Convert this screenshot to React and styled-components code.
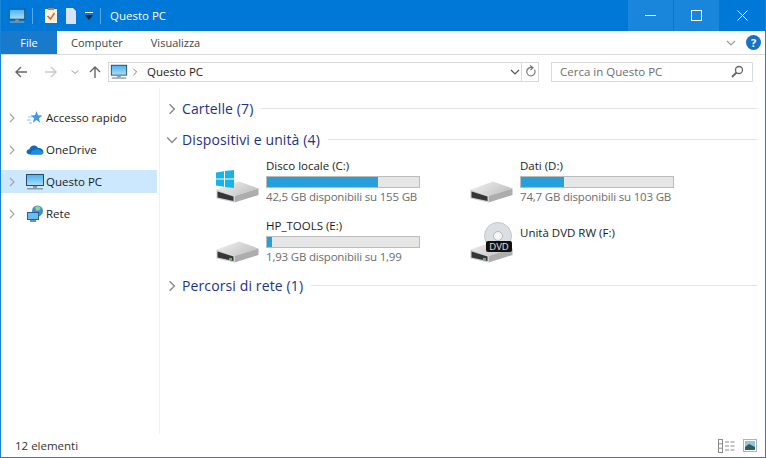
import React from "react";
import styled, { createGlobalStyle } from "styled-components";

const Global = createGlobalStyle`
  html, body { margin: 0; padding: 0; background: #fff; }
  body { font-family: "Open Sans", "Noto Sans", sans-serif; font-size: 11.5px; color: #1a1a1a; }
`;

function PcIcon({ size = 20 }) {
  return (
    <svg width={size} height={size} viewBox="0 0 20 20">
      <rect x="1" y="2" width="18" height="12" fill="#2b4a66" />
      <defs>
        <linearGradient id="pcscreen" x1="0" y1="0" x2="0" y2="1">
          <stop offset="0" stopColor="#4cb4ee" />
          <stop offset="1" stopColor="#a8dcf8" />
        </linearGradient>
      </defs>
      <rect x="2" y="3" width="16" height="10" fill="url(#pcscreen)" />
      <rect x="8" y="14" width="4" height="2" fill="#8d9aa5" />
      <rect x="2" y="16" width="16" height="1.5" fill="#8c99a5" />
    </svg>
  );
}

function StarIcon() {
  return (
    <svg width="18" height="18" viewBox="0 0 18 18">
      <path d="M10.500 2l1.500 4.300 4.500.2-3.600 2.800 1.300 4.400-3.700-2.600-3.700 2.600 1.300-4.400-3.600-2.800 4.500-.2z" fill="#3f9ae6" />
      <path d="M2 8h4M1 11h4M3 14h3" stroke="#8cc4ee" strokeWidth="1" />
    </svg>
  );
}

function CloudIcon() {
  return (
    <svg width="18" height="18" viewBox="0 0 18 18">
      <path d="M4 13.500c-2.400 0-3.600-1.400-3.400-3 .2-1.500 1.400-2.300 2.800-2.300C4 5.800 6 4.300 8.300 4.500c1.700.1 3 1 3.700 2.500 2.900-.4 5.400 1.500 5.400 4 0 1.500-1 2.500-2.500 2.500z" fill="#0f6cbd" />
      <path d="M5 13.500c-.5-2 .8-4 3.500-4.200 1.800-1.600 5.500-1.500 6.700 1 1.200 0 2 .8 2.200 1.500-.2.900-1 1.700-2.400 1.700z" fill="#1c8fe0" />
    </svg>
  );
}

function NetIcon() {
  return (
    <svg width="18" height="18" viewBox="0 0 18 18">
      <circle cx="11.500" cy="6" r="5.500" fill="#3d8fd0" />
      <path d="M9 2c2-1.500 5-1 5.500 1S12 6 10 5.500z" fill="#9ccf94" />
      <rect x="1" y="7" width="12" height="8" fill="#2b5f8f" />
      <rect x="2" y="8" width="10" height="6" fill="#66bdf0" />
      <rect x="4" y="15" width="6" height="2" fill="#7f8d99" />
    </svg>
  );
}

function DriveSvg({ led }) {
  return (
    <svg width="43" height="22" viewBox="0 0 43 22">
      <defs>
        <linearGradient id="drvtop" x1="0" y1="0" x2="1" y2="0.5">
          <stop offset="0" stopColor="#f2f2f2" />
          <stop offset="1" stopColor="#c4c4c4" />
        </linearGradient>
      </defs>
      <path d="M0.500 8.500L23 0.500 42.500 7.500 18.500 15z" fill="url(#drvtop)" />
      <path d="M18.500 15L42.500 7.500V14L18.500 21.500z" fill="#adadad" />
      <path d="M0.500 8.500L18.500 15V21.500L0.500 17.500z" fill="#cfcfcf" />
      <path d="M1.500 10.500L17.500 15.500V20L1.500 16.500z" fill="#34363a" />
      {led && <rect x="13" y="17" width="3" height="2" fill="#59c24f" />}
    </svg>
  );
}

function DriveIcon({ kind }) {
  return (
    <IconBox>
      {kind === "windows" && (
        <WinMark viewBox="0 0 18 18" width="18" height="18">
          <path d="M0 2.500L8 1.200V8.500H0zM9 1L18 0V8.500H9zM0 9.500H8V16.800L0 15.500zM9 9.500H18V18L9 17z" fill="#18b4e9" />
        </WinMark>
      )}
      <DriveBody>
        <DriveSvg led={kind === "usb" || kind === "dvd"} />
      </DriveBody>
      {kind === "dvd" && (
        <DiscMark viewBox="0 0 28 28" width="28" height="28">
          <circle cx="14" cy="14" r="13.500" fill="#dcdfe2" stroke="#c2c6ca" />
          <circle cx="14" cy="14" r="4.500" fill="#f4f4f4" stroke="#b4b8bc" />
          <circle cx="14" cy="14" r="1.500" fill="#fff" />
        </DiscMark>
      )}
      {kind === "dvd" && <DvdBadge>DVD</DvdBadge>}
    </IconBox>
  );
}

const drives = [
  { kind: "windows", name: "Disco locale (C:)", free: "42,5 GB disponibili su 155 GB", used: 73 },
  { kind: "plain", name: "Dati (D:)", free: "74,7 GB disponibili su 103 GB", used: 28 },
  { kind: "usb", name: "HP_TOOLS (E:)", free: "1,93 GB disponibili su 1,99", used: 3 },
  { kind: "dvd", name: "Unità DVD RW (F:)" },
];

const navItems = [
  { label: "Accesso rapido", icon: <StarIcon /> },
  { label: "OneDrive", icon: <CloudIcon /> },
  { label: "Questo PC", icon: <PcIcon size={20} />, active: true },
  { label: "Rete", icon: <NetIcon /> },
];

function Chevron({ down, color = "#a6a6a6", size = 10 }) {
  return (
    <svg width={size} height={size} viewBox="0 0 10 10">
      <path d={down ? "M1 3l4 4 4-4" : "M3 1l4 4-4 4"} fill="none" stroke={color} strokeWidth="1.200" />
    </svg>
  );
}

function Group({ title, open }) {
  return (
    <GroupHead>
      <Chevron down={open} color="#8a8a8a" size={12} />
      <GroupTitle>{title}</GroupTitle>
      <GroupLine />
    </GroupHead>
  );
}

export default function App() {
  return (
    <Win>
      <Global />
      <TitleBar>
        <QuickIcons>
          <PcIcon size={18} />
          <TitleSep $wide />
          <svg width="14" height="16" viewBox="0 0 14 16">
            <rect x="1" y="1" width="12" height="14" fill="#fdf1df" />
            <rect x="4" y="0" width="6" height="2" fill="#b5835a" />
            <path d="M3.500 8l3 3 4-6" fill="none" stroke="#e0632a" strokeWidth="1.500" />
          </svg>
          <svg width="14" height="16" viewBox="0 0 14 16">
            <path d="M2 0h7l3 3v13H2z" fill="#d6e4f5" />
          </svg>
          <svg width="10" height="10" viewBox="0 0 10 10">
            <rect x="1" y="1" width="8" height="1" fill="#fff" />
            <path d="M1 4h8L5 9z" fill="#10243a" />
          </svg>
          <TitleSep />
        </QuickIcons>
        <WinTitle>Questo PC</WinTitle>
        <WinButtons>
          <WinButton $lit>
            <svg width="11" height="11" viewBox="0 0 11 11"><path d="M0 5.500h11" stroke="#fff" /></svg>
          </WinButton>
          <WinButton $lit>
            <svg width="11" height="11" viewBox="0 0 11 11"><rect x=".5" y=".5" width="10" height="10" fill="none" stroke="#fff" /></svg>
          </WinButton>
          <WinButton>
            <svg width="11" height="11" viewBox="0 0 11 11"><path d="M.5.500l10 10M10.500.500l-10 10" stroke="#fff" /></svg>
          </WinButton>
        </WinButtons>
      </TitleBar>

      <Tabs>
        <FileTab>File</FileTab>
        <Tab>Computer</Tab>
        <Tab>Visualizza</Tab>
        <TabsEnd>
          <Chevron down color="#9a9a9a" size={10} />
          <Help>?</Help>
        </TabsEnd>
      </Tabs>

      <AddressRow>
        <NavArrows>
          <svg width="14" height="14" viewBox="0 0 14 14"><path d="M13 7H2M7 2L2 7l5 5" fill="none" stroke="#666" strokeWidth="1.400" /></svg>
          <svg width="14" height="14" viewBox="0 0 14 14"><path d="M1 7h11M7 2l5 5-5 5" fill="none" stroke="#c9c9c9" strokeWidth="1.400" /></svg>
          <Chevron down color="#8a8a8a" size={8} />
          <svg width="14" height="14" viewBox="0 0 14 14"><path d="M7 13V2M2 7l5-5 5 5" fill="none" stroke="#666" strokeWidth="1.400" /></svg>
        </NavArrows>
        <AddressBox>
          <PcIcon size={18} />
          <Chevron color="#777" size={8} />
          <Crumb>Questo PC</Crumb>
          <AddressEnd>
            <Chevron down color="#555" size={10} />
            <AddressDivider />
            <svg width="12" height="13" viewBox="0 0 12 13">
              <path d="M9.500 4.500a4.200 4.200 0 1 1-2-1.700" fill="none" stroke="#777" strokeWidth="1.200" />
              <path d="M5 .5l3 2.300L5.500 5" fill="none" stroke="#777" strokeWidth="1.200" />
            </svg>
          </AddressEnd>
        </AddressBox>
        <SearchBox>
          <span>Cerca in Questo PC</span>
          <svg width="13" height="13" viewBox="0 0 13 13">
            <circle cx="8" cy="5" r="3.500" fill="none" stroke="#666" strokeWidth="1.300" />
            <path d="M5.500 7.500L1 12" stroke="#666" strokeWidth="1.800" />
          </svg>
        </SearchBox>
      </AddressRow>

      <Body>
        <Nav>
          {navItems.map((item) => (
            <NavRow key={item.label} $active={item.active}>
              <Chevron color="#a6a6a6" />
              <NavIcon>{item.icon}</NavIcon>
              <span>{item.label}</span>
            </NavRow>
          ))}
        </Nav>
        <Content>
          <Group title="Cartelle (7)" />
          <Group title="Dispositivi e unità (4)" open />
          <DriveGrid>
            {drives.map((d) => (
              <Drive key={d.name}>
                <DriveIcon kind={d.kind} />
                <DriveText $solo={!d.free}>
                  <DriveName>{d.name}</DriveName>
                  {d.free && (
                    <>
                      <Bar>
                        <BarFill style={{ width: `${d.used}%` }} />
                      </Bar>
                      <DriveFree>{d.free}</DriveFree>
                    </>
                  )}
                </DriveText>
              </Drive>
            ))}
          </DriveGrid>
          <Group title="Percorsi di rete (1)" />
        </Content>
      </Body>

      <Status>
        <span>12 elementi</span>
        <ViewIcons>
          <svg width="17" height="14" viewBox="0 0 17 14">
            <rect x=".5" y=".5" width="4" height="13" fill="#fff" stroke="#8a8a8a" />
            <path d="M.5 4.800h4M.5 9.200h4" stroke="#8a8a8a" />
            <path d="M7 3h4M12.500 3h4M7 7h4M12.500 7h4M7 11h4M12.500 11h4" stroke="#8a8a8a" />
          </svg>
          <svg width="14" height="13" viewBox="0 0 14 13">
            <rect x=".5" y=".5" width="13" height="12" fill="#fff" stroke="#a9b4bd" />
            <rect x="2" y="2" width="10" height="9" fill="#8ec5e0" />
            <path d="M2 8l4-3 6 3v3H2z" fill="#2f5f55" />
          </svg>
        </ViewIcons>
      </Status>
    </Win>
  );
}

const Win = styled.div`
  width: 766px;
  height: 458px;
  box-sizing: border-box;
  border: 1px solid #1883d7;
  border-top: 0;
  display: flex;
  flex-direction: column;
  overflow: hidden;
  background: #fff;
`;
const TitleBar = styled.div`
  height: 31px;
  flex: none;
  margin: 0 -1px;
  background: #0078d7;
  display: flex;
  align-items: center;
  color: #fff;
`;
const QuickIcons = styled.div`
  display: flex;
  align-items: center;
  gap: 6px;
  padding-left: 8px;
`;
const TitleSep = styled.div`
  width: 1px;
  height: 16px;
  background: #5aa9e6;
  margin-right: ${(p) => (p.$wide ? "5px" : "0")};
`;
const WinTitle = styled.div`
  margin-left: 9px;
  font-size: 11.5px;
`;
const WinButtons = styled.div`
  margin-left: auto;
  display: flex;
  align-self: stretch;
  gap: 1px;
  margin-right: 1px;
`;
const WinButton = styled.div`
  width: 45px;
  display: flex;
  align-items: center;
  justify-content: center;
  background: ${(p) => (p.$lit ? "#1a86db" : "transparent")};
`;
const Tabs = styled.div`
  height: 23px;
  flex: none;
  display: flex;
  align-items: center;
  border-bottom: 1px solid #dadbdc;
  box-sizing: content-box;
`;
const FileTab = styled.div`
  width: 56px;
  align-self: stretch;
  background: #1979ca;
  color: #fff;
  display: flex;
  align-items: center;
  justify-content: center;
  font-size: 11px;
`;
const Tab = styled.div`
  padding: 0 14px;
  color: #444;
  font-size: 11px;
`;
const TabsEnd = styled.div`
  margin-left: auto;
  display: flex;
  align-items: center;
  gap: 10px;
  padding-right: 4px;
`;
const Help = styled.div`
  width: 15px;
  height: 15px;
  border-radius: 50%;
  background: #1673c4;
  color: #fff;
  font-weight: 700;
  font-size: 11px;
  display: flex;
  align-items: center;
  justify-content: center;
`;
const AddressRow = styled.div`
  height: 33px;
  flex: none;
  display: flex;
  align-items: center;
  padding-left: 13px;
`;
const NavArrows = styled.div`
  width: 94px;
  display: grid;
  grid-template-columns: 30px 27px 17px 14px;
  align-items: center;
`;
const AddressBox = styled.div`
  width: 431px;
  height: 20px;
  box-sizing: border-box;
  border: 1px solid #d9d9d9;
  display: flex;
  align-items: center;
  padding-left: 1px;
  gap: 3px;
`;
const Crumb = styled.span`
  margin-left: 5px;
`;
const AddressEnd = styled.div`
  margin-left: auto;
  display: flex;
  align-items: center;
  padding-right: 1px;
`;
const AddressDivider = styled.div`
  width: 1px;
  height: 18px;
  background: #d9d9d9;
  margin: 0 3px 0 1px;
`;
const SearchBox = styled.div`
  width: 202px;
  height: 20px;
  box-sizing: border-box;
  margin-left: 12px;
  border: 1px solid #d9d9d9;
  display: flex;
  align-items: center;
  justify-content: space-between;
  padding: 0 8px;
  color: #6d6d6d;
`;
const Body = styled.div`
  flex: 1;
  display: flex;
  min-height: 0;
`;
const Nav = styled.div`
  width: 159px;
  flex: none;
  box-sizing: border-box;
  padding-top: 18px;
  display: flex;
  flex-direction: column;
  gap: 9px;
  border-right: 1px solid #f0f0f0;
`;
const NavRow = styled.div`
  height: 23px;
  margin-right: 2px;
  display: flex;
  align-items: center;
  padding-left: 6px;
  background: ${(p) => (p.$active ? "#cce8ff" : "transparent")};
`;
const NavIcon = styled.div`
  width: 20px;
  height: 20px;
  margin: 0 1px 0 8px;
  display: flex;
  align-items: center;
  justify-content: center;
`;
const Content = styled.div`
  flex: 1;
  padding-top: 10px;
  padding-left: 6px;
  padding-right: 8px;
`;
const GroupHead = styled.div`
  height: 21px;
  margin-bottom: 10px;
  display: flex;
  align-items: center;
  gap: 4px;
`;
const GroupTitle = styled.div`
  font-size: 14px;
  letter-spacing: 0.12px;
  color: #1e3287;
  white-space: nowrap;
`;
const GroupLine = styled.div`
  flex: 1;
  height: 1px;
  background: #e3e3e3;
  margin-left: 4px;
`;
const DriveGrid = styled.div`
  display: grid;
  grid-template-columns: 254px 254px;
  grid-auto-rows: 60px;
  padding-left: 49px;
  margin-top: -5px;
  height: 120px;
`;
const Drive = styled.div`
  display: flex;
  gap: 3px;
  height: 50px;
`;
const IconBox = styled.div`
  position: relative;
  width: 48px;
  height: 50px;
  flex: none;
`;
const DriveBody = styled.div`
  position: absolute;
  left: 1px;
  top: 26px;
  line-height: 0;
`;
const WinMark = styled.svg`
  position: absolute;
  left: 1px;
  top: 15px;
  z-index: 1;
`;
const DiscMark = styled.svg`
  position: absolute;
  left: 15px;
  top: 7px;
`;
const DvdBadge = styled.div`
  position: absolute;
  left: 17px;
  top: 26px;
  width: 26px;
  height: 11px;
  line-height: 11px;
  text-align: center;
  background: #111;
  color: #e4e4e4;
  font-size: 9.5px;
  border-radius: 2px;
`;
const DriveText = styled.div`
  display: flex;
  flex-direction: column;
  width: 190px;
  padding-top: ${(p) => (p.$solo ? "9px" : "2px")};
`;
const DriveName = styled.div`
  height: 17px;
  line-height: 17px;
  white-space: nowrap;
`;
const Bar = styled.div`
  width: 154px;
  height: 13px;
  margin-top: 2px;
  box-sizing: border-box;
  border: 1px solid #bcbcbc;
  background: #e6e6e6;
`;
const BarFill = styled.div`
  height: 100%;
  background: #26a0da;
`;
const DriveFree = styled.div`
  height: 17px;
  line-height: 17px;
  letter-spacing: -0.19px;
  color: #6d6d6d;
  white-space: nowrap;
`;
const Status = styled.div`
  height: 23px;
  flex: none;
  display: flex;
  align-items: center;
  justify-content: space-between;
  padding: 0 8px 0 14px;
  color: #333;
`;
const ViewIcons = styled.div`
  display: flex;
  align-items: center;
  gap: 8px;
`;
